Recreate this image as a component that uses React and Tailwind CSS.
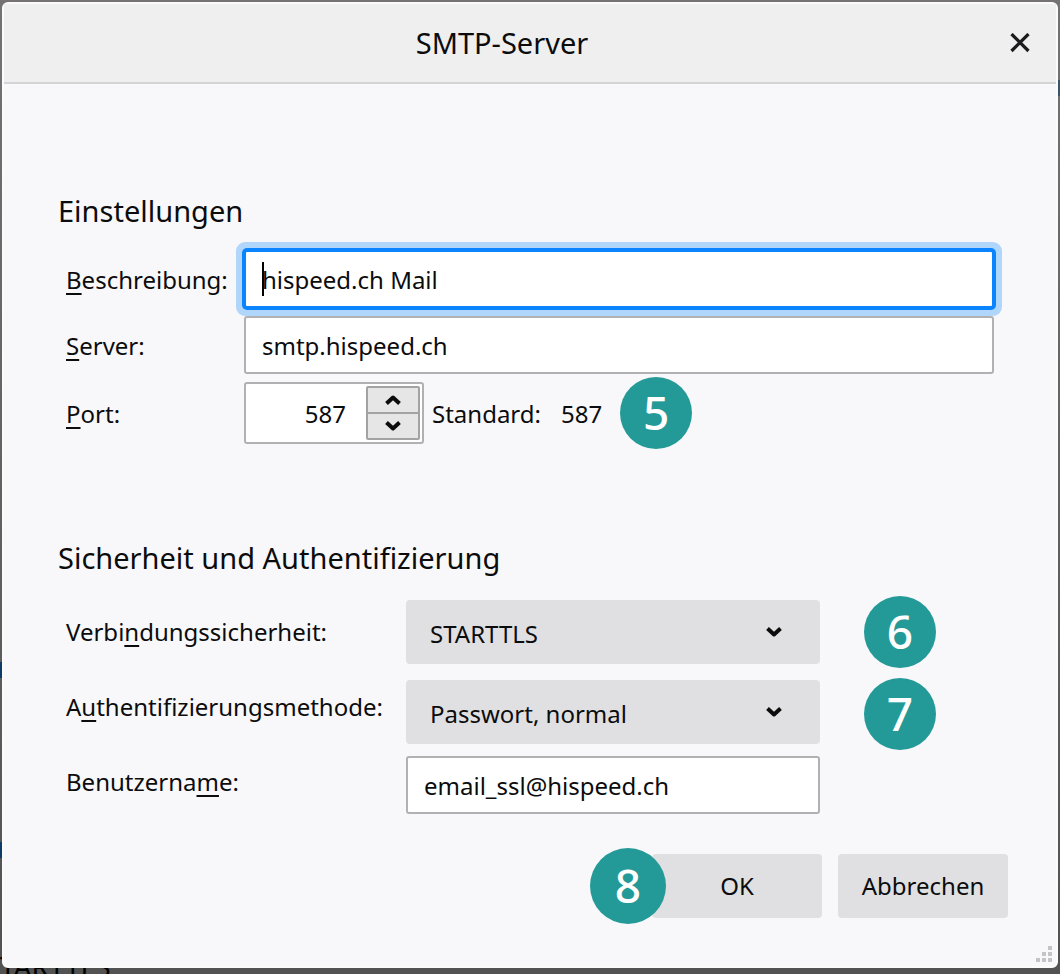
import React from "react";

const inputBase =
  "block w-full rounded-[3px] border-2 border-[#b1b1b3] bg-white text-[24px] leading-8 text-[#0c0c0d] outline-none";

const selectBase =
  "block h-16 w-full appearance-none rounded bg-[#e0e0e2] pt-1 pl-6 pr-16 text-[24px] leading-8 text-[#0c0c0d] outline-none";

const buttonBase =
  "h-16 w-[170px] rounded bg-[#e0e0e2] text-[24px] leading-8 text-[#0c0c0d]";

const headingBase = "text-[29px] leading-10 font-[450]";

function Key({ children }) {
  return (
    <span className="underline decoration-2 underline-offset-4 [text-decoration-skip-ink:none]">
      {children}
    </span>
  );
}

function Badge({ children, className = "size-[72px]" }) {
  return (
    <span
      className={
        "flex shrink-0 items-center justify-center rounded-full bg-[#249a98] pb-[2px] font-['Noto_Sans',sans-serif] text-[46px] leading-none font-medium text-white " +
        className
      }
    >
      {children}
    </span>
  );
}

function Chevron({ up = false }) {
  return (
    <svg width="16" height="12" viewBox="0 0 16 12" fill="none" aria-hidden="true">
      <path
        d={up ? "M1.5 9.5 8 3.5l6.5 6" : "M1.5 2.5l6.5 6 6.5-6"}
        stroke="#0c0c0d"
        strokeWidth="4"
        strokeLinejoin="round"
      />
    </svg>
  );
}

function Select({ id, value, options }) {
  return (
    <div className="relative">
      <select id={id} defaultValue={value} className={selectBase}>
        {options.map((option) => (
          <option key={option}>{option}</option>
        ))}
      </select>
      <span className="pointer-events-none absolute inset-y-0 right-[38px] flex items-center">
        <Chevron />
      </span>
    </div>
  );
}

function Row({ id, label, children }) {
  return (
    <div className="flex items-center">
      <label htmlFor={id} className="w-[178px] shrink-0 pt-[2px]">
        {label}
      </label>
      {children}
    </div>
  );
}

export default function App() {
  return (
    <div className="relative min-h-screen overflow-hidden bg-linear-to-b from-[#747272] to-[#525252] px-[2px] pt-[2px] pb-[6px] font-['Noto_Sans',sans-serif] text-[24px] leading-8 text-[#0c0c0d]">
      <div aria-hidden="true" className="absolute -bottom-2 left-0 text-[28px] leading-8 text-black">
        TARTTLS
      </div>
      <span aria-hidden="true" className="absolute top-[662px] left-0 h-4 w-[2px] bg-[#0e3a66]" />
      <span aria-hidden="true" className="absolute top-[842px] left-0 h-4 w-[2px] bg-[#0e3a66]" />
      <span aria-hidden="true" className="absolute top-20 right-0 h-4 w-[2px] bg-[#3d5468]" />

      <main
        role="dialog"
        aria-labelledby="title"
        className="relative rounded-md border-2 border-[#fbfbfc] bg-[#f8f8fa]"
      >
        <header className="flex h-20 items-center border-b-2 border-[#d4d4d6] bg-[#efefef] pr-4">
          <h1 id="title" className={"flex-1 text-center " + headingBase}>
            SMTP-Server
          </h1>
          <button type="button" aria-label="Schließen" className="flex size-10 items-center justify-center">
            <svg width="20" height="20" viewBox="0 0 20 20" fill="none" aria-hidden="true">
              <path d="M1.5 1l17 17M18.5 1l-17 17" stroke="#1c1c1e" strokeWidth="3.2" />
            </svg>
          </button>
        </header>

        <form className="pt-[107px] pb-12" onSubmit={(event) => event.preventDefault()}>
          <section className="pr-[62px] pl-[54px]">
            <h2 className={headingBase}>Einstellungen</h2>
            <div className="mt-[19px] flex flex-col gap-2 pl-2">
              <Row id="description" label={<><Key>B</Key>eschreibung:</>}>
                <div className="relative flex-1">
                  <input
                    id="description"
                    defaultValue="hispeed.ch Mail"
                    className="block h-[58px] w-full rounded-[3px] border-2 border-[#0a84ff] bg-white px-4 text-[24px] leading-8 text-[#0c0c0d] shadow-[0_0_0_2px_#0a84ff,0_0_0_8px_#b0d6fb] outline-none"
                  />
                  <span className="absolute top-3 left-[18px] h-[34px] w-[2px] bg-black" />
                </div>
              </Row>
              <Row id="server" label={<><Key>S</Key>erver:</>}>
                <div className="relative flex-1">
                  <input id="server" defaultValue="smtp.hispeed.ch" className={inputBase + " h-[58px] px-4"} />
                </div>
              </Row>
              <Row id="port" label={<><Key>P</Key>ort:</>}>
                <div className="flex h-[62px] w-[180px] rounded-[3px] border-2 border-[#b1b1b3] bg-white p-[2px]">
                  <input
                    id="port"
                    inputMode="numeric"
                    defaultValue="587"
                    className="w-[118px] min-w-0 flex-1 bg-transparent pt-[2px] pr-5 text-right text-[24px] leading-8 outline-none"
                  />
                  <div className="flex w-[54px] flex-col rounded-[2px] border-2 border-[#a3a3a3] bg-[#e6e6e6]">
                    <button type="button" aria-label="Erhöhen" className="flex flex-1 items-center justify-center border-b-2 border-[#a3a3a3]">
                      <Chevron up />
                    </button>
                    <button type="button" aria-label="Verringern" className="flex flex-1 items-center justify-center">
                      <Chevron />
                    </button>
                  </div>
                </div>
                <div className="ml-2 flex items-center">
                  <span className="pt-[2px]">Standard:</span>
                  <span className="ml-5 pt-[2px]">587</span>
                  <div className="-my-2 ml-[18px]">
                    <Badge>5</Badge>
                  </div>
                </div>
              </Row>
            </div>
          </section>

          <section className="mt-[94px] pl-[54px]">
            <h2 className={headingBase}>Sicherheit und Authentifizierung</h2>
            <div className="mt-4 flex items-start pl-2">
              <div className="flex w-[340px] shrink-0 flex-col leading-[75px]">
                <label htmlFor="security">Verbi<Key>n</Key>dungssicherheit:</label>
                <label htmlFor="auth">A<Key>u</Key>thentifizierungsmethode:</label>
                <label htmlFor="user">Benutzerna<Key>m</Key>e:</label>
              </div>
              <div className="flex w-[414px] flex-col pt-[6px]">
                <Select id="security" value="STARTTLS" options={["Keine", "STARTTLS", "SSL/TLS"]} />
                <div className="mt-4 mb-3">
                  <Select id="auth" value="Passwort, normal" options={["Passwort, normal", "Verschlüsseltes Passwort"]} />
                </div>
                <input id="user" defaultValue="email_ssl@hispeed.ch" className={inputBase + " h-[58px] px-4"} />
              </div>
              <div className="ml-11 flex flex-col gap-[10px] pt-[2px]">
                <Badge>6</Badge>
                <Badge>7</Badge>
              </div>
            </div>
          </section>

          <footer className="mt-[35px] flex justify-end gap-4 pr-12">
            <div className="relative">
              <button type="submit" className={buttonBase}>OK</button>
              <span className="pointer-events-none absolute -top-[6px] -left-[62px]">
                <Badge className="size-[76px]">8</Badge>
              </span>
            </div>
            <button type="button" className={buttonBase}>Abbrechen</button>
          </footer>
        </form>

        <svg className="absolute right-1 bottom-1" width="16" height="16" viewBox="0 0 16 16" fill="#c4c4c6" aria-hidden="true">
          <path d="M12 0h4v4h-4zM6 6h4v4H6zM12 6h4v4h-4zM0 12h4v4H0zM6 12h4v4H6zM12 12h4v4h-4z" />
        </svg>
      </main>
    </div>
  );
}
